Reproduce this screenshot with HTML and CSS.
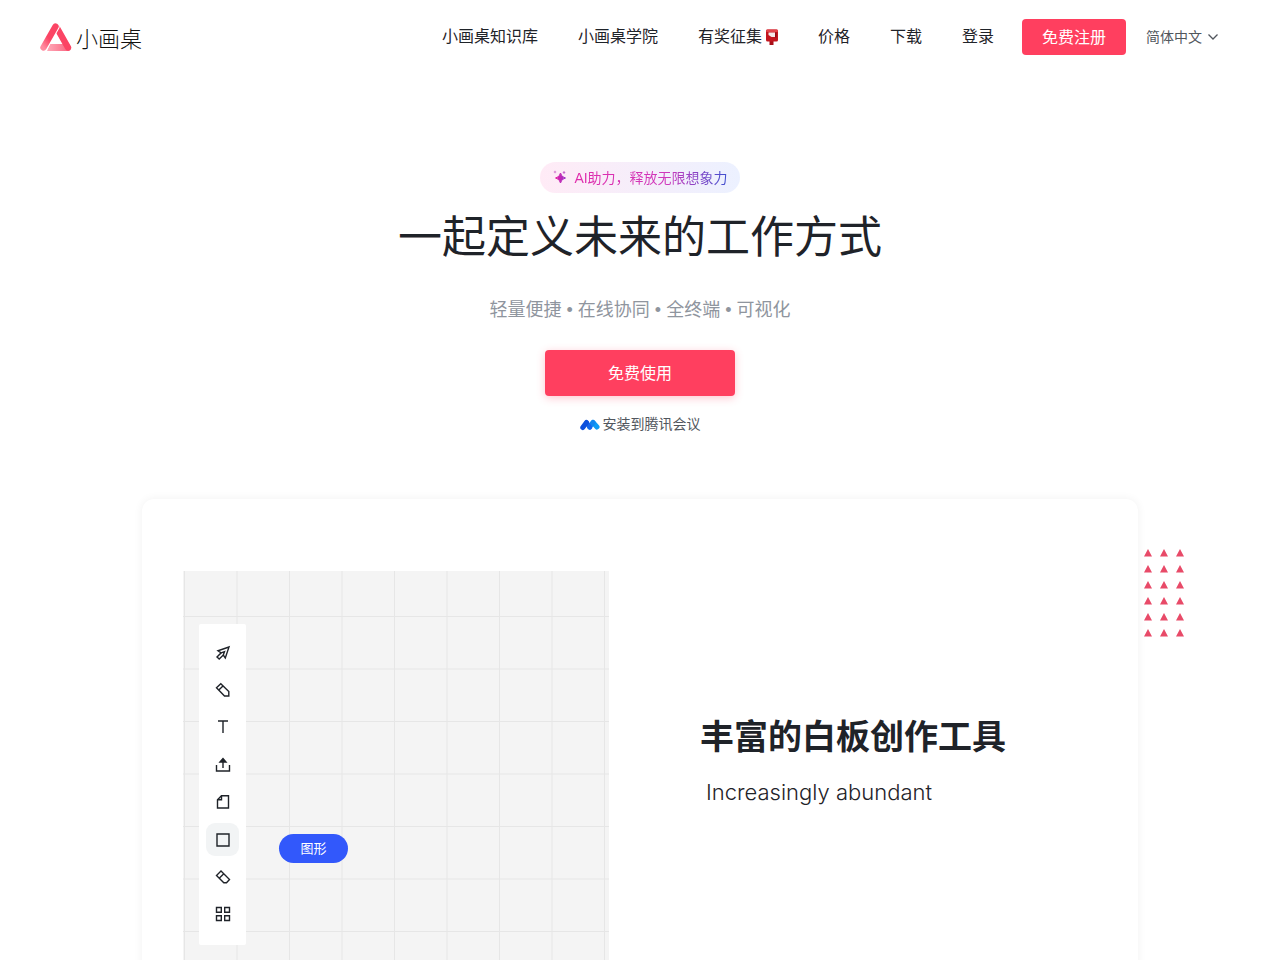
FILE: index.html
```html
<!DOCTYPE html>
<html lang="zh-CN">
<head>
  <meta charset="UTF-8" />
  <meta name="viewport" content="width=device-width, initial-scale=1.0"/>
  <title>小画桌</title>
  <link rel="stylesheet" href="styles.css">
</head>
<body>

<header class="header">
  <a class="logo" href="#">
    <svg class="logo-mark" viewBox="0 0 32 30" aria-hidden="true">
      <defs>
        <linearGradient id="logoSide" x1="0" y1="1" x2="0.7" y2="0">
          <stop offset="0" stop-color="#ff8ba0"/>
          <stop offset="0.5" stop-color="#fb4464"/>
        </linearGradient>
        <linearGradient id="logoBase" x1="0" y1="0" x2="1" y2="0">
          <stop offset="0" stop-color="#ffa9b8"/>
          <stop offset="1" stop-color="#f9607c"/>
        </linearGradient>
      </defs>
      <path d="M10 22H25L30.600 24.500Q31.500 29 28 29H7Z" fill="url(#logoBase)"/>
      <path d="M17 6L28 25.500" stroke="#fb4464" stroke-width="6.400" stroke-linecap="round"/>
      <path d="M3.500 25.500L15.500 4.500" stroke="#fff" stroke-width="8.500" stroke-linecap="round"/>
      <path d="M3.500 25.500L15.500 4.500" stroke="url(#logoSide)" stroke-width="6.400" stroke-linecap="round"/>
    </svg>
    <span>小画桌</span>
  </a>

  <nav class="nav">
    <a href="#">小画桌知识库</a>
    <a href="#">小画桌学院</a>
    <a class="nav-award" href="#">有奖征集<svg viewBox="0 0 16 16" width="16" height="16" aria-hidden="true">
        <rect x="7.500" y="10" width="4" height="6" fill="#a80f18"/>
        <rect x="4" y="0.500" width="12" height="12" rx="1.500" fill="#c3151f"/>
        <rect x="4" y="0.500" width="12" height="2.500" rx="1.200" fill="#e2434a"/>
        <path d="M6.500 3.500H13V8H9.500L6.500 6Z" fill="#f5e8e8"/>
        <path d="M13 3.500h1.500v5H13z" fill="#8e0c14"/>
      </svg></a>
    <a href="#">价格</a>
    <a href="#">下载</a>
    <a href="#">登录</a>
  </nav>

  <button class="btn btn-register" type="button">免费注册</button>

  <div class="lang">
    <select aria-label="语言">
      <option>简体中文</option>
      <option>English</option>
    </select>
    <svg viewBox="0 0 10 6" width="10" height="6" aria-hidden="true"><path d="M0.500 0.500L5 5L9.500 0.500" fill="none" stroke="#51565d" stroke-width="1.300"/></svg>
  </div>
</header>

<main>
  <section class="hero">
    <div class="badge">
      <svg viewBox="0 0 14 14" width="14" height="14" aria-hidden="true">
        <defs>
          <linearGradient id="spark" x1="0" y1="0" x2="1" y2="0">
            <stop offset="0" stop-color="#e61fa4"/>
            <stop offset="1" stop-color="#9a35c8"/>
          </linearGradient>
        </defs>
        <path d="M7.500 3Q8.300 7.200 12.500 8Q8.300 8.800 7.500 13Q6.700 8.800 2.500 8Q6.700 7.200 7.500 3Z" fill="url(#spark)" stroke="url(#spark)"/>
        <path d="M2 0.500L3.500 2L2 3.500L0.500 2Z" fill="#d98bd6"/>
        <path d="M11 1L12.500 2.500L11 4L9.500 2.500Z" fill="#c868cf"/>
      </svg>
      <span>AI助力，释放无限想象力</span>
    </div>
    <h1>一起定义未来的工作方式</h1>
    <p class="tagline">轻量便捷 • 在线协同 • 全终端 • 可视化</p>
    <button class="btn btn-start" type="button">免费使用</button>
    <a class="meeting" href="#">
      <svg viewBox="0 0 20 12" width="20" height="12" aria-hidden="true">
        <path d="M13 3.500L17 8" stroke="#0b9cf5" stroke-width="5" stroke-linecap="round"/>
        <path d="M9.500 8L13 3.500" stroke="#1086f0" stroke-width="5" stroke-linecap="round"/>
        <path d="M6.500 3.500L10 8.500" stroke="#1565ea" stroke-width="4.500" stroke-linecap="round"/>
        <path d="M2.800 8.500L6.500 3.500" stroke="#0d50dc" stroke-width="5" stroke-linecap="round"/>
      </svg>
      <span>安装到腾讯会议</span>
    </a>
  </section>

  <section class="card">
    <div class="board">
      <svg class="board-grid" aria-hidden="true">
        <defs>
          <pattern id="grid" x="1" y="45" width="52.500" height="52.500" patternUnits="userSpaceOnUse">
            <path d="M0.500 0V52.500M0 0.500H52.500" fill="none" stroke="#e6e6e6"/>
          </pattern>
        </defs>
        <rect width="100%" height="100%" fill="url(#grid)"/>
      </svg>

      <div class="toolbar">
        <button class="tool" type="button" aria-label="选择">
          <svg viewBox="0 0 16 16"><path d="M14 2L3 5.800L6.200 7.800L2 12L4.200 14L8.300 10L10.300 13Z"/><path d="M6.200 7.800L9.500 6.600L8.300 10"/></svg>
        </button>
        <button class="tool" type="button" aria-label="画笔">
          <svg viewBox="0 0 16 16"><path d="M1.500 5.800L5.800 1.800L13.800 9.500V14H9.500Z"/><path d="M3.800 8L8 4"/></svg>
        </button>
        <button class="tool" type="button" aria-label="文本">
          <svg viewBox="0 0 16 16"><path d="M3 2H13M8 2V14"/></svg>
        </button>
        <button class="tool" type="button" aria-label="上传">
          <svg viewBox="0 0 16 16"><path d="M1.500 8V14H14.500V8M8 11V3"/><path d="M5 5L8 1.500L11 5Z" fill="#1f2329"/></svg>
        </button>
        <button class="tool" type="button" aria-label="便签">
          <svg viewBox="0 0 16 16"><path d="M6.500 1.800H13.500V14H2.500V5.800Z"/><path d="M6.500 1.800V5.800H2.500"/></svg>
        </button>
        <button class="tool active" type="button" aria-label="图形">
          <svg viewBox="0 0 16 16"><path d="M2 2H14V14H2Z"/></svg>
          <span class="tooltip">图形</span>
        </button>
        <button class="tool" type="button" aria-label="橡皮擦">
          <svg viewBox="0 0 16 16"><path d="M1.500 6.500L6 2L14.500 10.500L11.500 13.800H8.800Z"/><path d="M4.200 9.200L8.800 4.800"/></svg>
        </button>
        <button class="tool" type="button" aria-label="更多">
          <svg viewBox="0 0 16 16"><path d="M1.500 1.500H6.300V6.300H1.500ZM9.700 1.500H14.500V6.300H9.700ZM1.500 9.700H6.300V14.500H1.500ZM9.700 9.700H14.500V14.500H9.700Z"/></svg>
        </button>
      </div>
    </div>

    <div class="feature">
      <h2>丰富的白板创作工具</h2>
      <p>Increasingly abundant</p>
    </div>

    <svg class="triangles" width="40" height="88" aria-hidden="true">
      <defs>
        <pattern id="tri" width="16" height="16" patternUnits="userSpaceOnUse">
          <path d="M4 0L8 7.500H0Z" fill="#e84a68"/>
        </pattern>
      </defs>
      <rect width="40" height="88" fill="url(#tri)"/>
    </svg>
  </section>
</main>

</body>
</html>
```
FILE: styles.css
```css
* {
  box-sizing: border-box;
}

body {
  margin: 0;
  font-family: "Liberation Sans", "Noto Sans CJK SC", sans-serif;
  font-size: 16px;
  background-color: #fff;
  color: #1f2329;
  overflow-x: hidden;
}

a {
  color: inherit;
  text-decoration: none;
}

button, select {
  font-family: inherit;
  cursor: pointer;
}

/* Header */
.header {
  display: flex;
  align-items: center;
  height: 74px;
  padding: 0 62px 0 40px;
}

.logo {
  display: flex;
  align-items: center;
  gap: 4px;
  margin-right: auto;
  font-size: 22px;
  font-weight: 300;
  line-height: 30px;
  color: #111;
}

.logo span {
  padding-top: 6px;
}

.logo-mark {
  width: 32px;
  height: 30px;
  fill: none;
}

.nav {
  display: flex;
  gap: 40px;
  line-height: 24px;
}

.nav a {
  white-space: nowrap;
}

.nav-award {
  display: flex;
  align-items: center;
}

.btn {
  padding: 0 20px 2px;
  border: none;
  border-radius: 4px;
  background-color: #ff3f5f;
  color: #fff;
  font-size: 16px;
}

.btn-register {
  height: 36px;
  margin-left: 28px;
}

.lang {
  display: flex;
  align-items: center;
  gap: 6px;
  margin-left: 20px;
}

.lang select {
  appearance: none;
  padding: 0;
  border: none;
  background: none;
  color: #51565d;
  font-size: 14px;
}

/* Hero */
.hero {
  display: flex;
  flex-direction: column;
  align-items: center;
  padding-top: 88px;
  text-align: center;
}

.badge {
  display: flex;
  align-items: center;
  gap: 7px;
  height: 31px;
  padding: 0 12px 2px 13px;
  border-radius: 16px;
  background: linear-gradient(90deg, #ffebf6, #ecf1ff);
  font-size: 14px;
}

.badge span {
  background: linear-gradient(90deg, #e02bab 0%, #cf38bb 60%, #3f51d0 100%);
  background-clip: text;
  -webkit-background-clip: text;
  color: transparent;
}

.hero h1 {
  margin: 13px 0 0;
  font-size: 44px;
  font-weight: 400;
  line-height: 64px;
}

.tagline {
  margin: 28px 0;
  color: #8f959e;
  font-size: 18px;
  line-height: 24px;
}

.btn-start {
  width: 190px;
  height: 46px;
  box-shadow: 0 2px 8px rgba(255, 63, 95, 0.3);
}

.meeting {
  display: flex;
  align-items: center;
  gap: 3px;
  margin-top: 18px;
  color: #51565d;
  font-size: 14px;
  line-height: 21px;
}

.meeting svg {
  fill: none;
}

/* Feature card */
.card {
  position: relative;
  display: grid;
  grid-template-columns: 426fr 529fr;
  max-width: 996px;
  margin: 64px auto 0;
  padding: 72px 0 40px 41px;
  border-radius: 12px;
  box-shadow: 0 0 10px rgba(0, 0, 0, 0.06);
}

.board {
  position: relative;
  padding: 53px 16px;
  background-color: #f4f4f4;
}

.board-grid {
  position: absolute;
  inset: 0;
  width: 100%;
  height: 100%;
}

.toolbar {
  position: relative;
  display: flex;
  flex-direction: column;
  align-items: center;
  justify-content: space-between;
  width: 47px;
  height: 321px;
  padding: 12px 0 14px;
  border-radius: 2px;
  background-color: #fff;
}

.tool {
  position: relative;
  display: grid;
  place-items: center;
  width: 33px;
  height: 33px;
  padding: 0;
  border: none;
  border-radius: 9px;
  background: none;
}

.tool svg {
  width: 16px;
  height: 16px;
  fill: none;
  stroke: #1f2329;
  stroke-width: 1.4px;
}

.tool.active {
  background-color: #f2f4f5;
}

.tooltip {
  position: absolute;
  top: 11px;
  left: 73px;
  width: 69px;
  border-radius: 15px;
  background-color: #3258fb;
  color: #fff;
  font-size: 13px;
  line-height: 29px;
}

.feature {
  padding: 141px 40px 0 91px;
}

.feature h2 {
  margin: 0;
  font-size: 34px;
  line-height: 50px;
  white-space: nowrap;
}

.feature p {
  margin: 14px 0 0 6px;
  font-family: Inter, "Liberation Sans", sans-serif;
  font-size: 22px;
  font-weight: 300;
  line-height: 32px;
}

.triangles {
  position: absolute;
  top: 50px;
  right: -46px;
}
```
